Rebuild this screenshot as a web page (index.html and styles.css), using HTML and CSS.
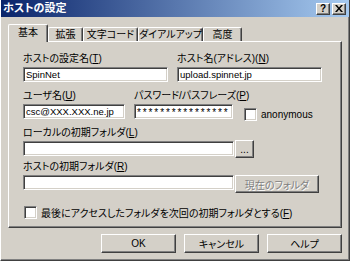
FILE: index.html
```html
<!DOCTYPE html>
<html lang="ja">
<head>
  <meta charset="UTF-8">
  <title>ホストの設定</title>
  <link rel="stylesheet" href="styles.css">
</head>
<body>
  <div class="window">
    <div class="titlebar">
      <span class="title">ホストの設定</span>
      <div class="caption-buttons">
        <span class="cap-btn help">?</span>
        <span class="cap-btn close">
          <svg width="8" height="7" viewBox="0 0 8 7"><path d="M0 0h2l2 2.5L6 0h2L5 3.5 8 7H6L4 4.5 2 7H0l3-3.5z" fill="#000"/></svg>
        </span>
      </div>
    </div>

    <div class="tabs">
      <div class="tab tab-active" style="width:40px">基本</div>
      <div class="tab" style="width:35px">拡張</div>
      <div class="tab" style="width:55px">文字コード</div>
      <div class="tab" style="width:65px">ダイアルアップ</div>
      <div class="tab" style="width:39px">高度</div>
    </div>

    <div class="panel">
      <div class="row row-1">
        <div class="field w-145">
          <label class="label">ホストの設定名(<u>T</u>)</label>
          <div class="input">SpinNet</div>
        </div>
        <div class="field w-145">
          <label class="label">ホスト名(アドレス)(<u>N</u>)</label>
          <div class="input">upload.spinnet.jp</div>
        </div>
      </div>

      <div class="row row-2">
        <div class="field w-102">
          <label class="label">ユーザ名(<u>U</u>)</label>
          <div class="input">csc@XXX.XXX.ne.jp</div>
        </div>
        <div class="field w-99">
          <label class="label">パスワード/パスフレーズ(<u>P</u>)</label>
          <div class="input pass">****************</div>
        </div>
        <div class="check anon">
          <span class="box"></span>
          <span>anonymous</span>
        </div>
      </div>

      <div class="field field-3">
        <label class="label">ローカルの初期フォルダ(<u>L</u>)</label>
        <div class="input-line">
          <div class="input w-211"></div>
          <div class="button btn-browse">...</div>
        </div>
      </div>

      <div class="field field-4">
        <label class="label">ホストの初期フォルダ(<u>R</u>)</label>
        <div class="input-line">
          <div class="input w-211"></div>
          <div class="button btn-current disabled">現在のフォルダ</div>
        </div>
      </div>

      <div class="check last-folder">
        <span class="box"></span>
        <span>最後にアクセスしたフォルダを次回の初期フォルダとする(<u>F</u>)</span>
      </div>
    </div>

    <div class="actions">
      <div class="button btn-main">OK</div>
      <div class="button btn-main">キャンセル</div>
      <div class="button btn-main">ヘルプ</div>
    </div>
  </div>
</body>
</html>
```

FILE: styles.css
```css
* {
  box-sizing: border-box;
  margin: 0;
  padding: 0;
}

body {
  font-family: "Liberation Sans", "Noto Sans CJK JP", sans-serif;
  font-size: 10px;
  font-feature-settings: "palt";
  color: #000;
  background: #d4d0c8;
}

u {
  text-decoration: underline;
}

.window {
  width: 350px;
  height: 261px;
  background: #d4d0c8;
  border-left: 1px solid #ffffff;
  border-right: 1px solid #404040;
  border-bottom: 1px solid #404040;
  box-shadow: inset -1px -1px 0 #808080;
}

.titlebar {
  display: flex;
  align-items: center;
  justify-content: space-between;
  height: 17px;
  padding: 0 3px 0 2px;
  background: linear-gradient(to right, #0a246a, #a6caf0);
}

.title {
  color: #fff;
  font-weight: bold;
  font-size: 11px;
  line-height: 17px;
}

.caption-buttons {
  display: flex;
  gap: 2px;
}

.cap-btn {
  display: flex;
  align-items: center;
  justify-content: center;
  width: 14px;
  height: 12px;
  background: #d4d0c8;
  border-top: 1px solid #fff;
  border-left: 1px solid #fff;
  border-right: 1px solid #404040;
  border-bottom: 1px solid #404040;
  box-shadow: inset -1px -1px 0 #808080;
  font-weight: bold;
  font-size: 10px;
  line-height: 10px;
}

.tabs {
  display: flex;
  align-items: flex-end;
  height: 24px;
  padding-left: 7px;
}

.tab {
  height: 14px;
  border-top: 1px solid #fff;
  border-left: 1px solid #fff;
  border-right: 1px solid #404040;
  box-shadow: inset -1px 0 0 #808080;
  border-radius: 2px 2px 0 0;
  text-align: center;
  line-height: 13px;
  white-space: nowrap;
}

.tab-active {
  height: 18px;
  margin-bottom: -1px;
  position: relative;
  background: #d4d0c8;
  line-height: 15px;
}

.panel {
  width: 334px;
  height: 187px;
  margin-left: 7px;
  padding: 10px 0 0 14px;
  border-top: 1px solid #fff;
  border-left: 1px solid #fff;
  border-right: 1px solid #404040;
  border-bottom: 1px solid #404040;
  box-shadow: inset -1px -1px 0 #808080;
}

.row {
  display: flex;
  align-items: flex-end;
}

.row-1 {
  gap: 9px;
}

.row-2 {
  margin-top: 7px;
  gap: 9px;
}

.field {
  display: flex;
  flex-direction: column;
}

.field-3 {
  margin-top: 7px;
}

.field-4 {
  margin-top: 2px;
}

.label {
  line-height: 13px;
  height: 13px;
  margin-bottom: 2px;
  white-space: nowrap;
}

.input {
  height: 15px;
  background: #fff;
  border-top: 1px solid #808080;
  border-left: 1px solid #808080;
  border-right: 1px solid #fff;
  border-bottom: 1px solid #fff;
  box-shadow: inset 1px 1px 0 #404040, inset -1px -1px 0 #d4d0c8;
  padding-left: 2px;
  font-size: 9.5px;
  line-height: 13px;
  white-space: nowrap;
  overflow: hidden;
}

.pass {
  font-size: 10px;
  letter-spacing: 1.9px;
  line-height: 15px;
}

.w-145 { width: 145px; }
.w-102 { width: 102px; }
.w-99 { width: 99px; }
.w-211 { width: 211px; }

.input-line {
  display: flex;
  align-items: flex-start;
}

.button {
  display: flex;
  align-items: center;
  justify-content: center;
  background: #d4d0c8;
  border-top: 1px solid #fff;
  border-left: 1px solid #fff;
  border-right: 1px solid #404040;
  border-bottom: 1px solid #404040;
  box-shadow: inset -1px -1px 0 #808080;
  white-space: nowrap;
}

.btn-browse {
  width: 19px;
  height: 18px;
  margin-top: -1px;
  margin-left: 1px;
}

.btn-current {
  width: 84px;
  height: 18px;
  margin-left: 1px;
}

.disabled {
  color: #808080;
  text-shadow: 1px 1px 0 #fff;
}

.check {
  display: flex;
  align-items: center;
  gap: 4px;
  white-space: nowrap;
}

.anon {
  margin-left: 2px;
  margin-bottom: -2px;
  height: 14px;
}

.box {
  width: 13px;
  height: 13px;
  background: #fff;
  border-top: 1px solid #808080;
  border-left: 1px solid #808080;
  border-right: 1px solid #fff;
  border-bottom: 1px solid #fff;
  box-shadow: inset 1px 1px 0 #404040, inset -1px -1px 0 #d4d0c8;
}

.last-folder {
  margin-top: 12px;
  margin-left: 1px;
}

.actions {
  display: flex;
  justify-content: flex-end;
  gap: 8px;
  margin-top: 6px;
  padding-right: 7px;
}

.btn-main {
  width: 75px;
  height: 19px;
}
```
